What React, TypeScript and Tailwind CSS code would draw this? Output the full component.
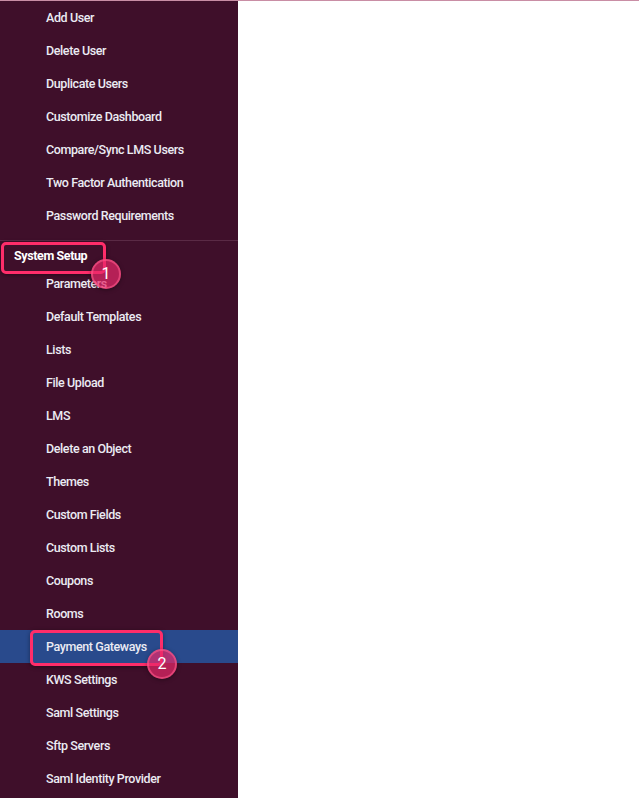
const userItems = [
  "Add User",
  "Delete User",
  "Duplicate Users",
  "Customize Dashboard",
  "Compare/Sync LMS Users",
  "Two Factor Authentication",
  "Password Requirements",
];

const setupItems = [
  "Parameters",
  "Default Templates",
  "Lists",
  "File Upload",
  "LMS",
  "Delete an Object",
  "Themes",
  "Custom Fields",
  "Custom Lists",
  "Coupons",
  "Rooms",
  "Payment Gateways",
  "KWS Settings",
  "Saml Settings",
  "Sftp Servers",
  "Saml Identity Provider",
];

const NavItem = ({ label, active }: { label: string; active?: boolean }) => (
  <div
    className={`flex h-[33px] items-center pl-[46px] pt-[2px] text-[12.5px] font-medium tracking-[-0.4px] text-[#ebebf3] ${
      active ? "bg-[#294a8c]" : ""
    }`}
  >
    {label}
  </div>
);

// numbered callout badge
const Badge = ({ n, className }: { n: number; className: string }) => (
  <div
    className={`absolute flex h-[30px] w-[30px] items-center justify-center rounded-full border-2 border-[#ff5a8c]/60 bg-[#e8286a]/70 text-[16px] text-white shadow-[0_1px_4px_rgba(0,0,0,0.35)] ${className}`}
  >
    {n}
  </div>
);

export default function App() {
  return (
    <div
      className="relative flex h-[798px] w-full overflow-hidden border-t border-[#c98ea5] bg-white"
      style={{ fontFamily: "Roboto, 'Liberation Sans', sans-serif" }}
    >
      <aside className="flex w-[238px] shrink-0 flex-col bg-[#3f0f2a]">
        {userItems.map((item) => (
          <NavItem key={item} label={item} />
        ))}
        <div className="mt-[8px] h-px bg-[#5a2a45]" />
        <div className="flex h-[26px] items-end pb-[1px] pl-[14px] text-[12.5px] font-bold tracking-[-0.4px] text-white">
          System Setup
        </div>
        {setupItems.map((item) => (
          <NavItem key={item} label={item} active={item === "Payment Gateways"} />
        ))}
      </aside>
      <main className="flex-1" />

      {/* annotation boxes */}
      <div className="absolute left-[1px] top-[241px] h-[32px] w-[105px] rounded-[5px] border-[3px] border-[#ff2d6a] shadow-[0_1px_4px_rgba(0,0,0,0.4)]" />
      <Badge n={1} className="left-[91px] top-[258px]" />
      <div className="absolute left-[30px] top-[629px] h-[36px] w-[133px] rounded-[5px] border-[3px] border-[#ff2d6a] shadow-[0_1px_4px_rgba(0,0,0,0.4)]" />
      <Badge n={2} className="left-[147px] top-[648px]" />
    </div>
  );
}
